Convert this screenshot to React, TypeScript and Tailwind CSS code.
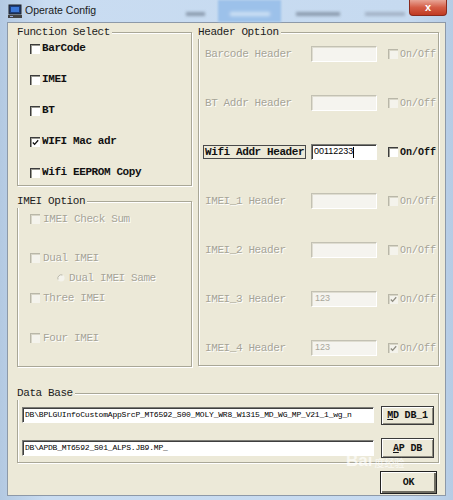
import React from 'react'

const mono = "font-['Liberation_Mono',monospace]"

function Check({ checked, disabled }: { checked?: boolean; disabled?: boolean }) {
  return (
    <span
      className={
        disabled
          ? 'relative w-[10px] h-[10px] shrink-0 border-t border-l border-[#b9b7a8] bg-[#f4f3ec] shadow-[inset_1px_1px_0_#d8d6c8]'
          : 'relative w-[10px] h-[10px] shrink-0 border-t border-l border-[#3c3c3c] bg-white shadow-[inset_1px_1px_0_#9a9a92]'
      }
    >
      {checked && (
        <svg viewBox="0 0 10 10" className="absolute inset-0 w-[9px] h-[9px]">
          <polyline
            points="2,5 4,7 8,2.5"
            fill="none"
            stroke={disabled ? '#8e8c80' : '#111'}
            strokeWidth="1.4"
          />
        </svg>
      )}
    </span>
  )
}

function Group({ title, className, children }: { title: string; className: string; children?: React.ReactNode }) {
  return (
    <div className={`relative border border-[#a9a797] shadow-[inset_1px_1px_0_#fff,1px_1px_0_#fff] ${className}`}>
      <span className={`absolute -top-[7px] -left-[1px] bg-[#ece9d8] pr-[2px] leading-[13px] text-[11px] tracking-[-0.4px] text-[#1c1c1c] ${mono}`}>
        {title}
      </span>
      {children}
    </div>
  )
}

function FnRow({ label, checked }: { label: string; checked?: boolean }) {
  return (
    <div className="h-[31px] flex items-center gap-[2px]">
      <Check checked={checked} />
      <span className={`text-[11px] font-bold tracking-[-0.4px] text-[#111] ${mono}`}>{label}</span>
    </div>
  )
}

const dis = `text-[11px] tracking-[-0.4px] text-[#a6a497] [text-shadow:1px_1px_0_#fff] ${mono}`

function ImeiRow({ label, className }: { label: string; className: string }) {
  return (
    <div className={`h-[20px] flex items-center gap-[3px] ${className}`}>
      <Check disabled />
      <span className={dis}>{label}</span>
    </div>
  )
}

type HeaderItem = { label: string; value?: string; on?: boolean; active?: boolean }

const headers: HeaderItem[] = [
  { label: 'Barcode Header' },
  { label: 'BT Addr Header' },
  { label: 'Wifi Addr Header', value: '00112233', active: true },
  { label: 'IMEI_1 Header' },
  { label: 'IMEI_2 Header' },
  { label: 'IMEI_3 Header', value: '123', on: true },
  { label: 'IMEI_4 Header', value: '123', on: true },
]

function HeaderRow({ item }: { item: HeaderItem }) {
  return (
    <div className="h-[18px] flex items-center">
      <div className="w-[106px] flex">
        {item.active ? (
          <span className={`-ml-[2px] px-[1px] border border-[#4a4a4a] leading-[12px] text-[11px] font-bold tracking-[-0.4px] text-[#111] ${mono}`}>
            {item.label}
          </span>
        ) : (
          <span className={dis}>{item.label}</span>
        )}
      </div>
      {item.active ? (
        <div className="w-[66px] h-[16px] flex items-center pl-[2px] bg-white border border-t-[#7d7d77] border-l-[#7d7d77] border-b-white border-r-white shadow-[inset_1px_1px_0_#3f3f3f] font-['Liberation_Sans',sans-serif] text-[9px] text-black">
          {item.value}
          <span className="w-[1px] h-[11px] bg-black" />
        </div>
      ) : (
        <div className="w-[66px] h-[16px] flex items-center pl-[3px] bg-[#f5f4ef] border border-t-[#c3c1b3] border-l-[#c3c1b3] border-b-white border-r-white shadow-[inset_1px_1px_0_#dfddd1] font-['Liberation_Sans',sans-serif] text-[9px] text-[#a9a79b]">
          {item.value}
        </div>
      )}
      <div className="ml-[11px] flex items-center gap-[2px]">
        <Check checked={item.on} disabled={!item.active} />
        <span
          className={
            item.active
              ? `text-[10px] font-bold text-[#111] ${mono}`
              : `text-[10px] text-[#a6a497] [text-shadow:1px_1px_0_#fff] ${mono}`
          }
        >
          On/Off
        </span>
      </div>
    </div>
  )
}

function Btn({ children, className }: { children: React.ReactNode; className: string }) {
  return (
    <div
      className={`flex items-center justify-center bg-[#ece9d8] border border-[#3a3a3a] shadow-[inset_1px_1px_0_#fff,inset_-1px_-1px_0_#8d8b7f] text-[10px] font-bold tracking-[-0.2px] text-[#111] ${mono} ${className}`}
    >
      {children}
    </div>
  )
}

function PathInput({ text }: { text: string }) {
  return (
    <div className={`w-[352px] h-[16px] flex items-center pl-[2px] bg-white border border-t-[#7d7d77] border-l-[#7d7d77] border-b-white border-r-white shadow-[inset_1px_1px_0_#3f3f3f] text-[8px] tracking-[-0.2px] text-black overflow-hidden whitespace-nowrap ${mono}`}>
      {text}
    </div>
  )
}

export default function App() {
  return (
    <div className="relative w-[453px] h-[500px] flex flex-col bg-[linear-gradient(90deg,#b3c9e2,#c9dcf1_10%,#c6daf0_90%,#b6cce5)] overflow-hidden">
      {/* title bar */}
      <div className="h-[22px] flex items-center shrink-0">
        <svg viewBox="0 0 14 14" className="ml-[8px] w-[14px] h-[14px]">
          <rect x="1" y="1" width="12" height="9" fill="#1d3d7a" stroke="#222" />
          <rect x="3" y="3" width="8" height="5" fill="#3c78d8" />
          <rect x="0" y="11" width="14" height="3" fill="#444" />
          <rect x="2" y="12" width="3" height="1" fill="#9ad" />
        </svg>
        <span className="ml-[3px] font-['Liberation_Sans',sans-serif] text-[10.5px] text-[#1a1a1a]">Operate Config</span>
        <span className="ml-[90px] w-[19px] h-[4px] mt-[6px] bg-[#8d9db0] blur-[1.5px]" />
        <div className="ml-[13px] w-[63px] h-[22px] self-start flex items-center justify-center bg-[#9cc1ea] blur-[1px]">
          <span className="w-[40px] h-[4px] mt-[6px] bg-[#d2e3f5] blur-[1.5px]" />
        </div>
        <span className="ml-[15px] w-[44px] h-[4px] mt-[6px] bg-[#8d9db0] blur-[1.5px]" />
        <span className="ml-[25px] w-[40px] h-[4px] mt-[6px] bg-[#a3b3c6] blur-[1.5px]" />
        <div className="ml-auto mr-[6px] self-start w-[38px] h-[16px] flex items-center justify-center rounded-b-[4px] border border-t-0 border-[#8a2a1d] bg-[linear-gradient(180deg,#e8a596,#d45c45_50%,#c03a22)]">
          <span className="font-['Liberation_Sans',sans-serif] text-[11px] font-bold leading-none text-white">x</span>
        </div>
      </div>

      {/* client */}
      <div className="mx-[7px] h-[474px] border border-[#8d99a8] bg-[#ece9d8] flex flex-col pl-[9px]">
        <div className="mt-[9px] flex gap-[6px]">
          <div className="flex flex-col">
            <Group title="Function Select" className="w-[175px] h-[154px] pl-[12px]">
              <FnRow label="BarCode" />
              <FnRow label="IMEI" />
              <FnRow label="BT" />
              <FnRow label="WIFI Mac adr" checked />
              <FnRow label="Wifi EEPROM Copy" />
            </Group>
            <Group title="IMEI Option" className="mt-[15px] w-[175px] h-[166px] pl-[12px] flex flex-col">
              <ImeiRow label="IMEI Check Sum" className="mt-[7px]" />
              <ImeiRow label="Dual IMEI" className="mt-[19px]" />
              <div className="h-[20px] flex items-center gap-[4px] pl-[27px]">
                <svg viewBox="0 0 8 8" className="w-[8px] h-[8px]">
                  <circle cx="4" cy="4" r="3.5" fill="#f4f3ec" />
                  <path d="M1 5.5 A3.5 3.5 0 0 1 5.5 1" fill="none" stroke="#b9b7a8" strokeWidth="1" />
                </svg>
                <span className={dis}>Dual IMEI Same</span>
              </div>
              <ImeiRow label="Three IMEI" className="" />
              <ImeiRow label="Four IMEI" className="mt-[20px]" />
            </Group>
          </div>
          <Group title="Header Option" className="w-[241px] h-[334px] pl-[6px] pt-[12px] flex flex-col gap-[31px]">
            {headers.map((h) => (
              <HeaderRow key={h.label} item={h} />
            ))}
          </Group>
        </div>

        <Group title="Data Base" className="mt-[26px] w-[422px] h-[70px] pl-[4px] pt-[11px] flex flex-col gap-[13px]">
          <div className="h-[20px] flex items-center">
            <PathInput text="DB\BPLGUInfoCustomAppSrcP_MT6592_S00_MOLY_WR8_W1315_MD_WG_MP_V21_1_wg_n" />
            <Btn className="ml-[7px] w-[53px] h-[19px]">
              <span><span className="underline">M</span>D DB_1</span>
            </Btn>
          </div>
          <div className="h-[20px] flex items-center">
            <PathInput text="DB\APDB_MT6592_S01_ALPS.JB9.MP_" />
            <Btn className="ml-[7px] w-[53px] h-[20px]">
              <span><span className="underline">A</span>P DB</span>
            </Btn>
          </div>
        </Group>

        <div className="mt-[8px] flex justify-end pr-[8px]">
          <Btn className="w-[57px] h-[23px] border-[#222] shadow-[inset_1px_1px_0_#fff,inset_-2px_-2px_0_#6f6d62]">OK</Btn>
        </div>
      </div>

      {/* watermark */}
      <div className="absolute left-[346px] top-[452px] flex items-end gap-[2px] text-white/70 pointer-events-none">
        <span className="font-['Liberation_Sans',sans-serif] text-[17px] font-bold leading-none">Bai</span>
        <span className="font-['Noto_Sans_CJK_SC',sans-serif] text-[10px] leading-none mb-[1px]">度经验</span>
      </div>
    </div>
  )
}
